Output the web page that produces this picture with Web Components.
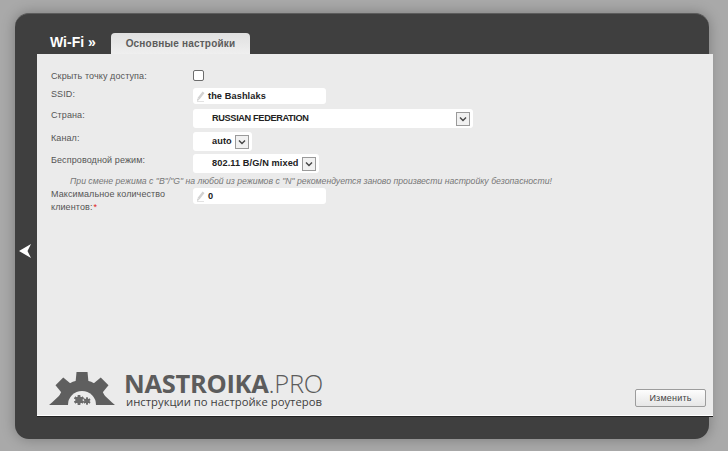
<!DOCTYPE html>
<html lang="ru">
<head>
<meta charset="utf-8">
<title>Wi-Fi</title>
<style>
  html, body { margin: 0; height: 451px; overflow: hidden; }
  body { background: #a9a9a9; font-family: "Liberation Sans", Arial, sans-serif; }
</style>
</head>
<body>
<router-shell title-text="Wi-Fi »" tab="Основные настройки">
  <form-row height="11" gap="5">
    Скрыть точку доступа:
    <check-box slot="control"></check-box>
  </form-row>
  <form-row height="16" gap="5">
    SSID:
    <text-field slot="control" value="the Bashlaks"></text-field>
  </form-row>
  <form-row height="19" gap="4">
    Страна:
    <select-field slot="control" value="RUSSIAN FEDERATION" width="280" style="letter-spacing:-.35px"></select-field>
  </form-row>
  <form-row height="19" gap="3">
    Канал:
    <select-field slot="control" value="auto"></select-field>
  </form-row>
  <form-row height="19" gap="0">
    Беспроводной режим:
    <select-field slot="control" value="802.11 B/G/N mixed"></select-field>
  </form-row>
  <hint-line>При смене режима с "B"/"G" на любой из режимов с "N" рекомендуется заново произвести настройку безопасности!</hint-line>
  <form-row height="16" gap="0">
    Максимальное количество клиентов:<span style="color:#e02020;margin-left:1px">*</span>
    <text-field slot="control" value="0"></text-field>
  </form-row>
  <site-logo slot="logo"></site-logo>
  <action-button slot="action">Изменить</action-button>
</router-shell>

<script>
class RouterShell extends HTMLElement {
  constructor() {
    super();
    this.attachShadow({ mode: 'open' });
    this.shadowRoot.innerHTML = `
      <style>
        :host {
          display: grid;
          grid-template-columns: 22px 676px;
          grid-template-rows: 40px 362px 1fr;
          width: 694px;
          height: 426px;
          margin: 13px 0 0 15px;
          background: #3f3f3f;
          border-top: 1px solid #5c5c5c;
          box-sizing: border-box;
          border-radius: 14px;
          box-shadow: 0 0 14px rgba(0,0,0,.28);
        }
        .head { grid-column: 2; display: flex; align-items: flex-end; }
        .title {
          color: #fff;
          font: bold 14px/19px "Liberation Sans", sans-serif;
          margin: 0 0 2px 13px;
          width: 61px;
        }
        .tab {
          width: 139px;
          height: 21px;
          box-sizing: border-box;
          background: linear-gradient(#e0e0e0, #efefef);
          border-radius: 4px 4px 0 0;
          color: #5c5c5c;
          font: bold 10px/22px "Liberation Sans", sans-serif;
          letter-spacing: .2px;
          text-align: center;
        }
        .side { grid-column: 1; grid-row: 2; display: flex; align-items: center; padding-left: 4px; }
        .side svg { margin-top: 32px; }
        .panel {
          grid-column: 2;
          grid-row: 2;
          background: #ebebeb;
          border-bottom: 1px solid #fff;
          box-sizing: border-box;
          display: flex;
          flex-direction: column;
          box-shadow: 0 1px 0 #222;
        }
        .form { flex: 1; padding: 16px 0 0 14px; }
        .foot { display: flex; justify-content: space-between; align-items: flex-end; padding: 0 7px 0 12px; }
      </style>
      <div class="head">
        <div class="title">${this.getAttribute('title-text')}</div>
        <div class="tab">${this.getAttribute('tab')}</div>
      </div>
      <div class="side">
        <svg width="13" height="14" viewBox="0 0 13 14"><path d="M0 7 12 0 8.500 7 12 14Z" fill="#fff"/></svg>
      </div>
      <div class="panel">
        <div class="form"><slot></slot></div>
        <div class="foot"><slot name="logo"></slot><slot name="action"></slot></div>
      </div>
    `;
  }
}

class FormRow extends HTMLElement {
  constructor() {
    super();
    const height = this.getAttribute('height');
    const gap = this.getAttribute('gap');
    this.attachShadow({ mode: 'open' });
    this.shadowRoot.innerHTML = `
      <style>
        :host {
          display: grid;
          grid-template-columns: 142px 1fr;
          min-height: ${height}px;
          margin-bottom: ${gap}px;
          color: #555;
          font: 9px/13px "Liberation Sans", sans-serif;
          letter-spacing: .1px;
        }
        .label { width: 122px; }
        .control { height: ${height}px; display: flex; align-items: flex-start; }
      </style>
      <div class="label"><slot></slot></div>
      <div class="control"><slot name="control"></slot></div>
    `;
  }
}

class CheckBox extends HTMLElement {
  constructor() {
    super();
    this.attachShadow({ mode: 'open' });
    this.shadowRoot.innerHTML = `
      <style>
        :host {
          display: block;
          width: 11px;
          height: 11px;
          background: #fff;
          border: 1px solid #6c6c6c;
          border-radius: 2px;
          box-sizing: border-box;
        }
      </style>
    `;
  }
}

class TextField extends HTMLElement {
  constructor() {
    super();
    this.attachShadow({ mode: 'open' });
    this.shadowRoot.innerHTML = `
      <style>
        :host {
          display: flex;
          align-items: center;
          width: 133px;
          height: 16px;
          background: #fff;
          border-radius: 3px;
          color: #222;
          font: bold 9.200px/16px "Liberation Sans", sans-serif;
          padding-left: 4px;
          box-sizing: border-box;
        }
        svg { margin-right: 3px; flex: none; }
      </style>
      <svg width="8" height="11" viewBox="0 0 8 11">
        <path d="M5.500 .5 7.500 2 2.500 8.500 .5 7Z" fill="#d2d2d2"/>
        <path d="M.5 7.500 2 8.700 .3 10Z" fill="#bbb"/>
        <path d="M0 10.500H7" stroke="#e2e2e2"/>
      </svg>
      <span>${this.getAttribute('value')}</span>
    `;
  }
}

class SelectField extends HTMLElement {
  constructor() {
    super();
    const width = this.getAttribute('width');
    this.attachShadow({ mode: 'open' });
    this.shadowRoot.innerHTML = `
      <style>
        :host {
          display: flex;
          align-items: center;
          ${width ? `width: ${width}px; justify-content: space-between;` : 'width: max-content;'}
          height: 19px;
          background: #fff;
          border-radius: 3px;
          padding: 0 3px 0 19px;
          box-sizing: border-box;
          color: #222;
          font: bold 9.200px/19px "Liberation Sans", sans-serif;
        }
        .arrow {
          width: 14px;
          height: 14px;
          margin-left: 3px;
          box-sizing: border-box;
          border: 1px solid #9a9a9a;
          background: #f1f1f1;
          display: flex;
          align-items: center;
          justify-content: center;
        }
      </style>
      <span>${this.getAttribute('value')}</span>
      <span class="arrow">
        <svg width="8" height="6" viewBox="0 0 8 6"><path d="M1 1.500 4 4.500 7 1.500" fill="none" stroke="#444" stroke-width="1.400"/></svg>
      </span>
    `;
  }
}

class HintLine extends HTMLElement {
  constructor() {
    super();
    this.attachShadow({ mode: 'open' });
    this.shadowRoot.innerHTML = `
      <style>
        :host {
          display: block;
          margin: 1px 0 0 19px;
          height: 14px;
          color: #777;
          font: italic 8.700px/14px "Liberation Sans", sans-serif;
          white-space: nowrap;
        }
      </style>
      <slot></slot>
    `;
  }
}

class SiteLogo extends HTMLElement {
  constructor() {
    super();
    this.attachShadow({ mode: 'open' });
    const teeth = [-45, 0, 45].map(a =>
      `<path d="M26 16 27.500 0H38.500L40 16Z" transform="rotate(${a} 33 32)"/>`).join('');
    const small = [0, 60, 120, 180, 240, 300].map(a =>
      `<rect x="-1.200" y="-5" width="2.400" height="10" transform="rotate(${a})"/>`).join('');
    this.shadowRoot.innerHTML = `
      <style>
        :host { display: flex; align-items: flex-start; height: 38px; margin-bottom: 5px; }
        svg { flex: none; margin: 0 9px 0 0; }
        .words { color: #5c5c5c; font-family: "Open Sans", sans-serif; white-space: nowrap; }
        .name { font-size: 25.500px; line-height: 23px; letter-spacing: -.3px; font-weight: 700; }
        .name span { font-weight: 300; }
        .sub { font-size: 11.300px; line-height: 14px; font-weight: 400; color: #3e3e3e; margin-left: 2px; }
      </style>
      <svg width="66" height="33" viewBox="0 0 66 33">
        <g fill="#5f5f5f">
          ${teeth}
          <circle cx="33" cy="32" r="24"/>
          <path d="M0 33 3 30.500 12 22 20 33ZM66 33 63 30.500 54 22 46 33Z"/>
        </g>
        <circle cx="33" cy="33" r="14" fill="#ebebeb"/>
        <g fill="#6a6a6a">
          <g transform="translate(30 28)">${small}<circle r="3.500"/></g>
          <g transform="translate(38 29) scale(.7)">${small}<circle r="3.500"/></g>
        </g>
      </svg>
      <div class="words">
        <div class="name">NASTROIKA<span>.PRO</span></div>
        <div class="sub">инструкции по настройке роутеров</div>
      </div>
    `;
  }
}

class ActionButton extends HTMLElement {
  constructor() {
    super();
    this.attachShadow({ mode: 'open' });
    this.shadowRoot.innerHTML = `
      <style>
        :host {
          display: block;
          width: 71px;
          height: 18px;
          margin-bottom: 8px;
          box-sizing: border-box;
          border: 1px solid #9c9c9c;
          border-radius: 2px;
          background: linear-gradient(#fdfdfd, #e6e6e6);
          color: #444;
          font: 9px/16px "Liberation Sans", sans-serif;
          letter-spacing: .2px;
          text-align: center;
        }
      </style>
      <slot></slot>
    `;
  }
}

customElements.define('router-shell', RouterShell);
customElements.define('form-row', FormRow);
customElements.define('check-box', CheckBox);
customElements.define('text-field', TextField);
customElements.define('select-field', SelectField);
customElements.define('hint-line', HintLine);
customElements.define('site-logo', SiteLogo);
customElements.define('action-button', ActionButton);
</script>
</body>
</html>
